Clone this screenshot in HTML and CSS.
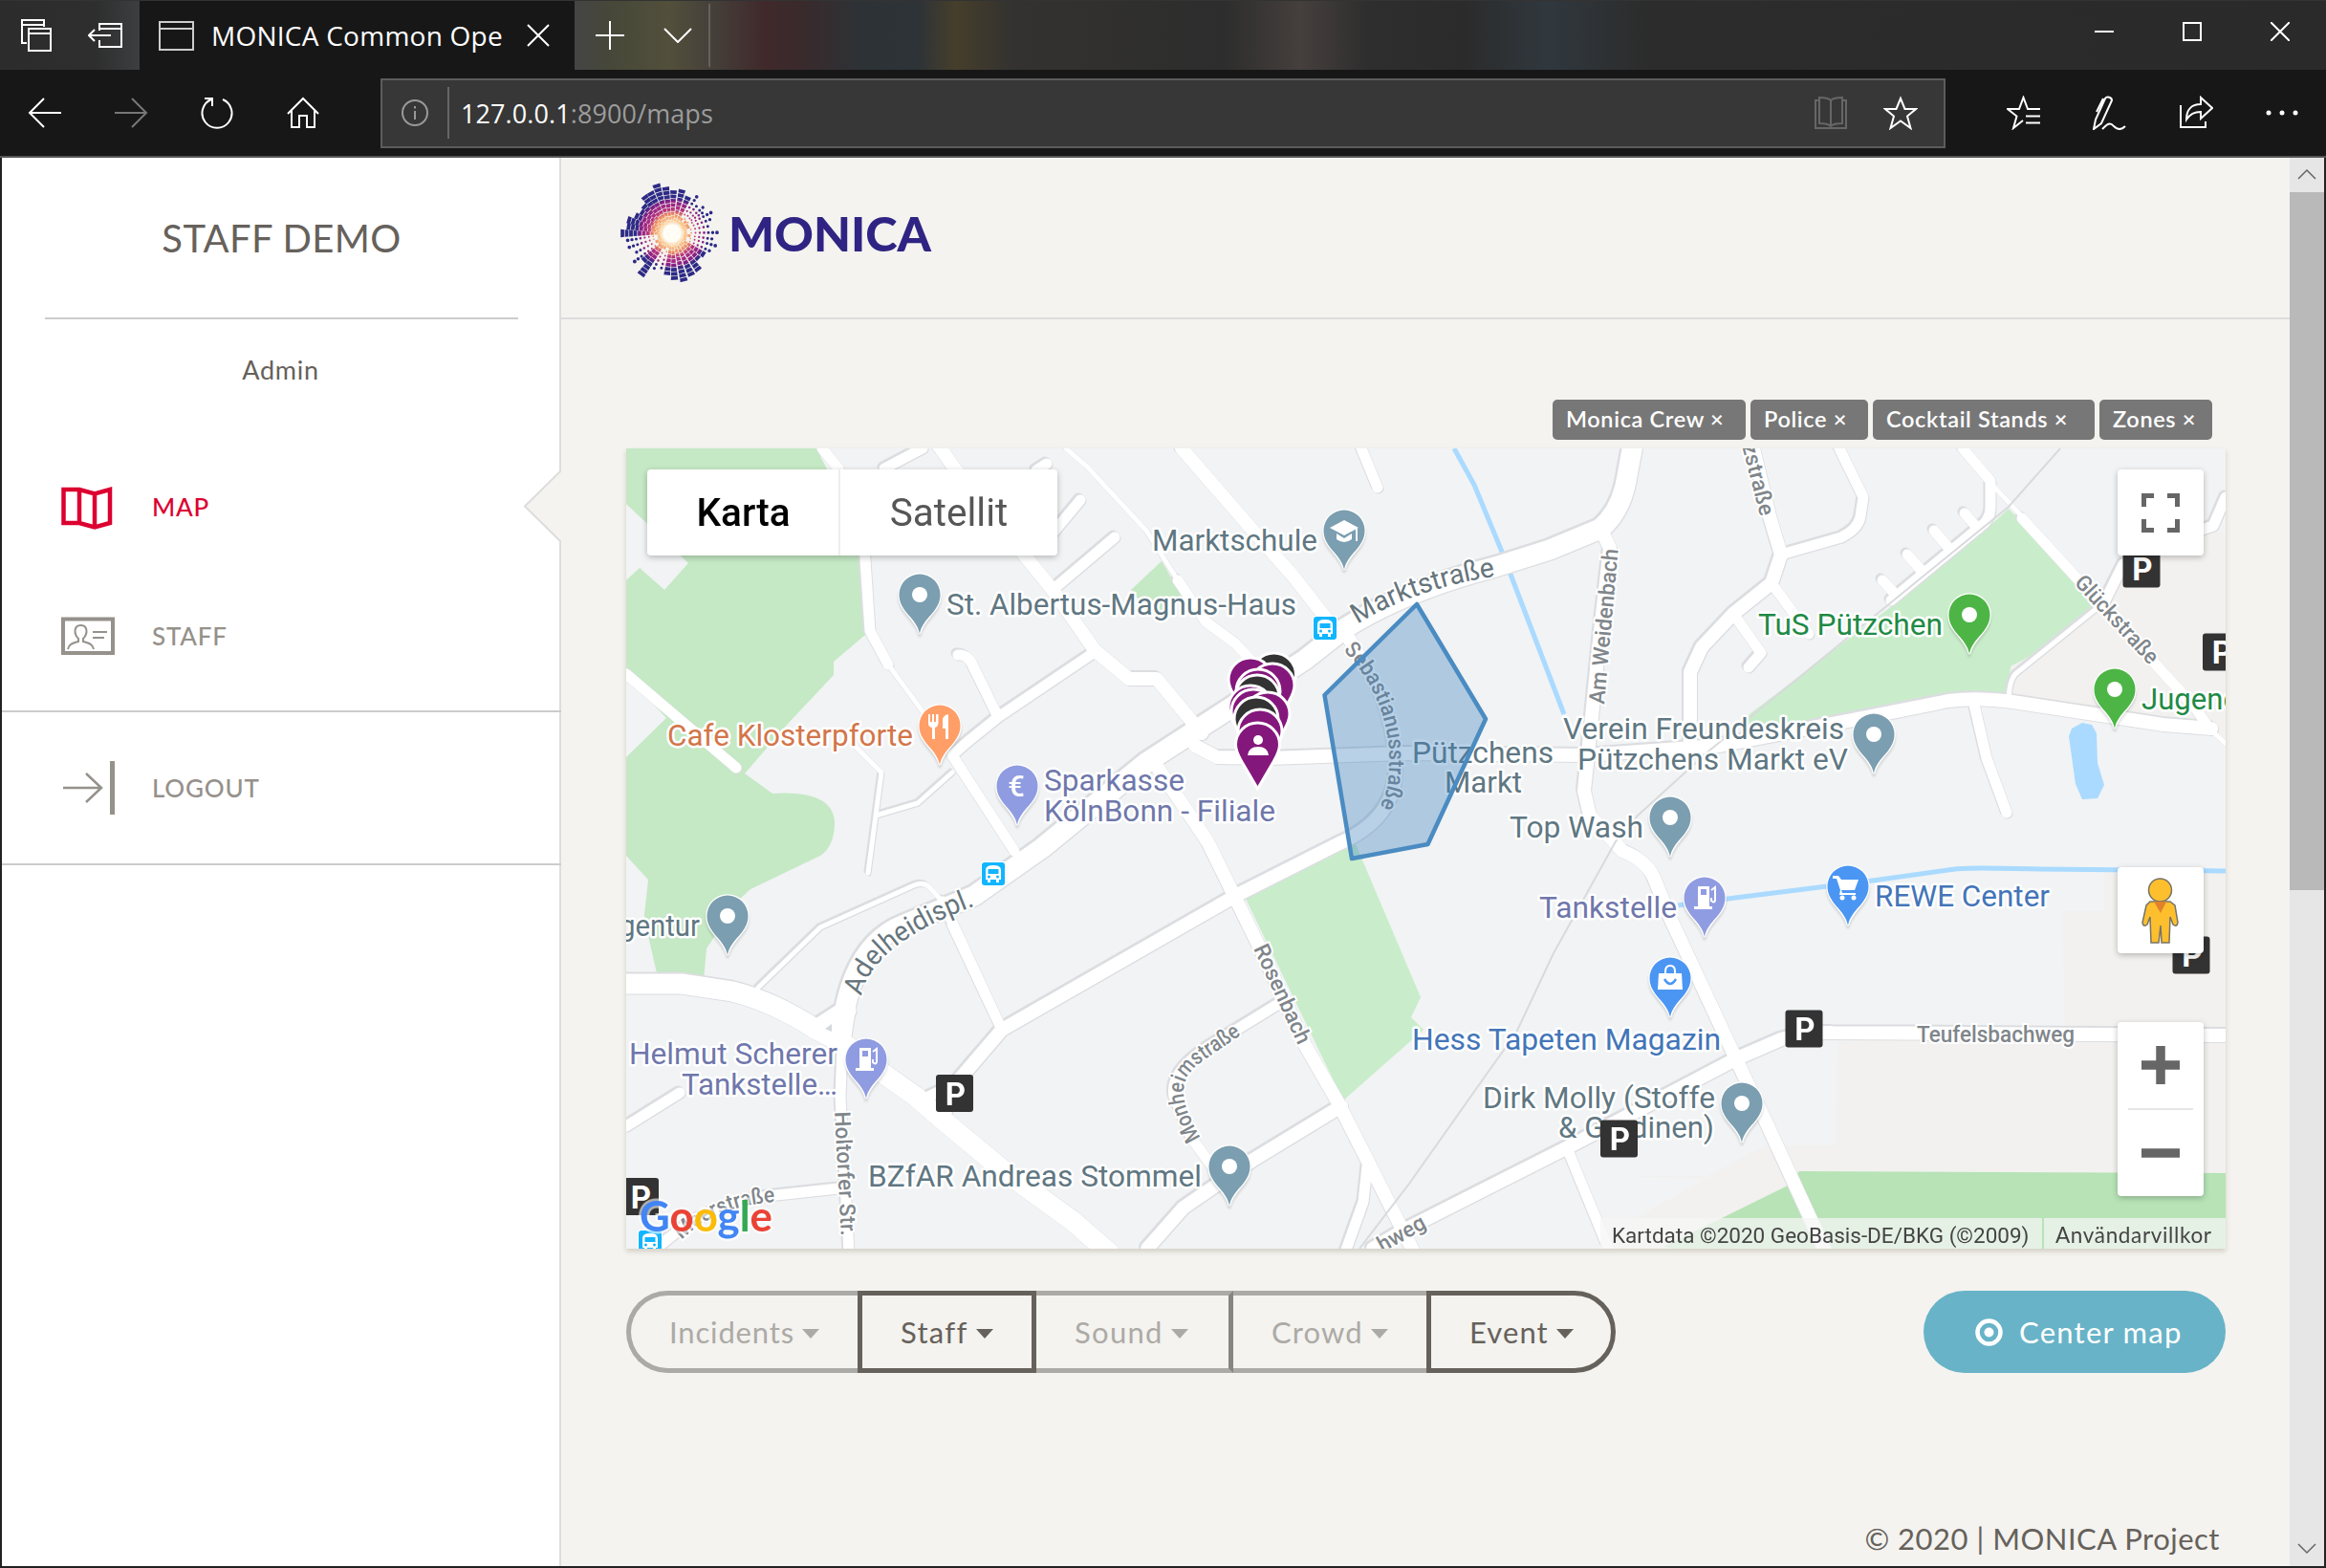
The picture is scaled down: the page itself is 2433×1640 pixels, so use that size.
FILE: index.html
```html
<!DOCTYPE html>
<html lang="sv">
<head>
<meta charset="utf-8">
<title>MONICA Common Operational Picture</title>
<link rel="stylesheet" href="styles.css">
</head>
<body>
<div class="window">
  <div class="tabstrip">
    <div class="tab-tools">
      <svg class="ic" width="32" height="34" viewBox="0 0 32 34"><path d="M6 25H1V1H24V8M1 6H24M8 10H31V33H8ZM8 15H31"/></svg>
      <svg class="ic" width="36" height="26" viewBox="0 0 36 26"><path d="M12 8V1H35V25H12V18M12 6H35M1 13H24M7 7L1 13L7 19"/></svg>
    </div>
    <div class="tab">
      <svg class="ic tab-icon" width="37" height="31" viewBox="0 0 37 31"><path d="M1 1H36V30H1ZM1 8H36"/></svg>
      <span class="tab-title">MONICA Common Ope</span>
      <svg class="ic" width="24" height="24" viewBox="0 0 24 24"><path d="M1 1L23 23M23 1L1 23"/></svg>
    </div>
    <div class="tab-actions">
      <svg class="ic" width="30" height="30" viewBox="0 0 30 30"><path d="M15 0V30M0 15H30"/></svg>
      <svg class="ic" width="30" height="16" viewBox="0 0 30 16"><path d="M1 1L15 15L29 1"/></svg>
    </div>
    <div class="window-buttons">
      <svg class="ic" width="20" height="20" viewBox="0 0 20 20"><path d="M0 10H20"/></svg>
      <svg class="ic" width="20" height="20" viewBox="0 0 20 20"><path d="M1 1H19V19H1Z"/></svg>
      <svg class="ic" width="20" height="20" viewBox="0 0 20 20"><path d="M0 0L20 20M20 0L0 20"/></svg>
    </div>
  </div>

  <div class="toolbar">
    <div class="nav-buttons">
      <svg class="ic" width="36" height="34" viewBox="0 0 36 34"><path d="M35 17H2M17 2L2 17L17 32"/></svg>
      <svg class="ic dim" width="36" height="34" viewBox="0 0 36 34"><path d="M1 17H34M19 2L34 17L19 32"/></svg>
      <svg class="ic" width="36" height="34" viewBox="0 0 36 34"><path d="M12 3A15.500 15.500 0 1 0 24 3M5 2H13V10"/></svg>
      <svg class="ic" width="36" height="34" viewBox="0 0 36 34"><path d="M2 18L18 2L34 18M6 14V32H14V20H22V32H30V14"/></svg>
    </div>
    <div class="address">
      <svg class="ic info" width="28" height="28" viewBox="0 0 28 28"><circle cx="14" cy="14" r="13"/><path d="M14 12V21M14 7V9.500"/></svg>
      <span class="url"><b>127.0.0.1</b>:8900/maps</span>
      <svg class="ic book" width="36" height="36" viewBox="0 0 36 36"><path d="M6 5H2V34H34V5H30M18 5C15 2 10 2 6 2V29C10 29 15 29 18 32C21 29 26 29 30 29V2C26 2 21 2 18 5V32"/></svg>
      <svg class="ic" width="36" height="36" viewBox="0 0 36 36"><path d="M18 3L22.500 14H34L25 21.500L28.500 34L18 26.500L7.500 34L11 21.500L2 14H13.500Z"/></svg>
    </div>
    <div class="hub-buttons">
      <svg class="ic" width="36" height="36" viewBox="0 0 36 36"><path d="M35 14H22L17.500 2L13 14H1L10.500 21.500L7 34L17 26M20 21.500H35M20 28.500H35"/></svg>
      <svg class="ic" width="36" height="36" viewBox="0 0 36 36"><path d="M1 35L3 25L13 3C15 0 20 2 20 5L9 29ZM4 17L11 3M10 35C15 30 18 27 22 32C26 36 30 36 34 32"/></svg>
      <svg class="ic" width="36" height="36" viewBox="0 0 36 36"><path d="M2 10V33H28V27M8 25C8 14 14 9 23 9V2L35 13L23 24V17C16 17 12 19 8 25Z"/></svg>
      <svg class="ic dots" width="36" height="6" viewBox="0 0 36 6"><circle cx="4" cy="3" r="2.500"/><circle cx="18" cy="3" r="2.500"/><circle cx="32" cy="3" r="2.500"/></svg>
    </div>
  </div>

  <div class="page">
    <aside class="sidebar">
      <div class="brand">STAFF DEMO</div>
      <div class="user">Admin</div>
      <nav>
        <a class="item active">
          <svg class="nav-icon" width="58" height="56" viewBox="0 0 58 56"><path d="M2.500 10H19L35 14.500L51 10V45L35 49.500L19 45H2.500ZM19 10V45M35 14.500V49.500" stroke-width="4.500"/></svg>
          <span>MAP</span>
        </a>
        <a class="item">
          <svg class="nav-icon" width="58" height="56" viewBox="0 0 58 56"><rect x="2" y="10.500" width="52" height="35.500" stroke-width="4"/><path d="M7 42C8 37 11 36 18 34V31C13 26 13 17 20.500 17S28 26 23 31V34C30 36 33 37 34 42M33 24H48M33 30H45" stroke-width="2"/></svg>
          <span>STAFF</span>
        </a>
        <a class="item logout">
          <svg class="nav-icon" width="58" height="56" viewBox="0 0 58 56"><path d="M2 28H42M26 13L42 28L26 43" stroke-width="2.500"/><path d="M53.500 0V56" stroke-width="5"/></svg>
          <span>LOGOUT</span>
        </a>
      </nav>
      <svg class="notch" width="39" height="75" viewBox="0 0 39 75"><path d="M39 0L1 37.500L39 75" /></svg>
    </aside>

    <main class="content">
      <header class="topbar">
        <svg class="logo" width="340" height="120" viewBox="640 184 340 120">
          <defs>
            <radialGradient id="burst" gradientUnits="userSpaceOnUse" cx="704" cy="244" r="52">
              <stop offset="0" stop-color="#fff"/><stop offset=".18" stop-color="#fff3dc"/>
              <stop offset=".26" stop-color="#fcc98c"/><stop offset=".38" stop-color="#ee8f62"/>
              <stop offset=".48" stop-color="#b4327f"/><stop offset=".64" stop-color="#8a1f86"/>
              <stop offset=".72" stop-color="#2d2a86"/><stop offset="1" stop-color="#2d2a86"/>
            </radialGradient>
          </defs>
          <g id="rays" fill="url(#burst)"></g>
          <circle cx="704" cy="244" r="9.500" fill="#fffdf6"/>
          <text class="logo-text" x="763" y="263" textLength="212" lengthAdjust="spacingAndGlyphs">MONICA</text>
        </svg>
      </header>

      <div class="tags">
        <span class="tag t1">Monica Crew ×</span>
        <span class="tag t2">Police ×</span>
        <span class="tag t3">Cocktail Stands ×</span>
        <span class="tag t4">Zones ×</span>
      </div>

      <section class="map">
        <svg class="map-canvas" width="1673" height="837" viewBox="655 469 1673 837">
          <defs>
            <path id="pin" d="M0 41C-3 24-21.500 18-21.500 0A21.500 21.500 0 0 1 21.500 0C21.500 18 3 24 0 41Z"/>
            <path id="mark" d="M0 46L-17 17C-21 10-23 6-23 0A23 23 0 0 1 23 0C23 6 21 10 17 17Z"/>
            <g id="bus"><rect x="-13" y="-13" width="26" height="26" rx="3" fill="#fff"/><rect x="-12" y="-12" width="24" height="24" rx="3" fill="#12b5ff"/><path d="M-8-4Q-8-9 0-9T8-4V6H6V9H3V6H-3V9H-6V6H-8Z" fill="#fff"/><path d="M-5.500-5H5.500V0H-5.500Z" fill="#12b5ff"/><circle cx="-4.500" cy="3" r="1.500" fill="#12b5ff"/><circle cx="4.500" cy="3" r="1.500" fill="#12b5ff"/></g>
            <g id="pump" fill="#fff"><path d="M-7-12H5V9H8V12H-11V9H-7ZM-4-9V-3H2V-9Z" fill-rule="evenodd"/><path d="M7-8L11-11V3Q10 6 7 3V0" fill="none" stroke="#fff" stroke-width="2"/></g>
            <g id="park"><rect x="-19.500" y="-19.500" width="39" height="39" rx="3" fill="#333"/><text class="p" x="1" y="12" text-anchor="middle">P</text></g>
            <g id="roads" fill="none" stroke-linejoin="round" stroke-linecap="round">
              <g class="w-thin">
                <path d="M894 780L922 808L916 853L908 913M916 853L960 840L996 808M929 695L967 747"/>
                <path d="M793 1033L858 970L956 926Q966 922 972 928L986 943"/>
                <path d="M1115 469L1137 488L1199 555L1232 607M2082 505L2113 538M2311 762L2328 778"/>
                <path d="M2221 590L2201 630L2108 705Q2102 712 2101 730"/>
              </g>
              <g class="w-small">
                <path d="M860 469L877 490L904 570L910 660L929 695M925 490L965 469M1101 617L1166 562M1095 565L1130 523M1084 492L1095 485"/>
                <path d="M1145 682L1044 750L1013 775L996 790L1061 890M1002 685Q1011 684 1016 693L1044 750M655 705L770 803M996 967L1048 1077L986 943"/>
                <path d="M1232 607L1261 650L1292 673L1311 693M1424 469L1441 510M1853 610L1892 663M1813 642L1842 683L1829 698"/>
                <path d="M1863 580L1926 562Q1944 553 1946 540L1949 520L1924 469M1978 628L2076 547Q2082 540 2082 530V503L2053 469M1969 607L1984 623M1995 580L2011 598M2023 555L2040 575M2055 537L2069 553"/>
                <path d="M2115 542L2296 740L2311 762M2300 555L2315 550L2328 520M2065 737L2078 793L2099 850M1342 1047L1277 1087Q1222 1118 1228 1147L1246 1190L1273 1227M1430 1220L1426 1257L1407 1310"/>
                <path d="M1640 1203L1684 1310M881 1097L879 1147L888 1310M877 1243L812 1250Q740 1258 690 1303M655 1178L711 1143M965 1150L1000 1133L988 1170M2221 590L2201 630"/>
              </g>
              <g class="w-mid">
                <path d="M981 465L1000 492L1101 617L1145 680L1181 710L1210 710L1257 767M1236 469L1315 560L1353 603L1395 657"/>
                <path d="M1000 1133L1048 1077L1240 967L1296 935L1399 883Q1462 856 1460 800T1430 700L1408 663"/>
                <path d="M1676 557L1684 573L1674 660L1665 750L1657 827L1663 853L1697 890Q1722 900 1730 918L1747 960L1817 1110L1847 1173L1910 1310"/>
                <path d="M1250 780L1273 792L1326 793L1468 788L1659 790L1797 780L1938 753L2038 733Q2067 729 2105 734L2263 758L2313 762"/>
                <path d="M1768 780V703L1780 677L1813 642L1853 610L1863 580L1851 540L1834 469"/>
                <path d="M1211 803L1263 880L1322 1000L1365 1093L1399 1152L1430 1213L1480 1312M1403 1157L1311 1213L1238 1263L1200 1306"/>
                <path d="M1436 1306L1468 1287L1640 1200L1817 1107L1863 1087Q1890 1079 1917 1080L2330 1083"/>
              </g>
              <g class="w-main">
                <path d="M650 1029H713L766 1037Q810 1048 854 1077L885 1093L927 1125L958 1147L988 1173L1053 1227L1122 1277L1160 1310"/>
                <path d="M879 1090L885 1050Q900 985 946 967L1019 937L1090 887L1200 797L1365 690L1407 657Q1468 618 1564 593L1621 575L1674 553Q1695 535 1701 503L1708 465M854 1077L885 1057"/>
              </g>
            </g>
          </defs>

          <rect x="655" y="469" width="1673" height="837" fill="#f1f3f4"/>
          <path fill="#f2f1ef" d="M2328 557H2300L2221 583L2190 638L2103 697V735L2317 763L2328 780ZM2201 912H2328V1230H1700L1780 1233L1847 1198H1920L1922 1090L2160 1073L2157 953H2201ZM1680 1306L1713 1273L1847 1198L1900 1225H2000V1306Z"/>
          <path fill="#c5e8c5" d="M655 469H854L900 560L905 664L872 692V706L824 757L779 809L808 830Q873 826 873 862Q872 886 858 895L785 930L774 940L739 992L736 1025L688 1022L679 983L674 957L678 920L655 895Z"/>
          <path fill="#f1f3f4" d="M655 527L690 560L720 589L695 617L669 594L655 607ZM655 705L697 751L655 792Z"/>
          <path fill="#c5e8c5" d="M1215 587L1236 623L1205 645L1183 617Z"/>
          <path fill="#c9edcb" d="M1303 940L1409 883H1418L1486 1043L1476 1064L1489 1077L1405 1151ZM2101 532L2169 603L2190 638L2151 672L2103 697L2101 730L2038 727L1917 755L1815 775L1830 747L1980 633L2076 555Z"/>
          <path fill="#b7e3b6" d="M1882 1225L2328 1227V1306H1750L1740 1304L1870 1240Z"/>
          <path fill="#aadaff" d="M2178 756L2188 758L2193 767L2194 798L2201 821L2194 835L2178 836L2171 820L2164 770L2167 762Z"/>
          <path fill="none" stroke="#aadaff" stroke-width="5" d="M1521 469L1542 507L1571 577L1636 747M1755 947L1807 940L1959 921L2045 909Q2057 907 2134 909L2328 911"/>
          <use href="#roads" class="casing"/>
          <use href="#roads" class="fill"/>
          <path class="rail" d="M2155 469L2101 530L1788 785L1713 853L1690 880L1625 997L1586 1080L1556 1122L1474 1238L1422 1306"/>
          <path d="M863 1076L870 1071V1079Z" fill="#d5d8dc"/>

          <defs>
            <path id="p1" d="M1420 653Q1478 616 1568 602"/>
            <path id="p2" d="M1678 737L1693 572"/>
            <path id="p3" d="M1405 680C1436 710 1453 755 1453 790S1450 830 1441 848"/>
            <path id="p4" d="M901 1042Q912 987 1021 947"/>
            <path id="p5" d="M873 1163L880 1295"/>
            <path id="p6" d="M1311 992L1359 1096"/>
            <path id="p7" d="M1256 1190C1228 1142 1235 1125 1262 1107L1306 1077"/>
            <path id="p8" d="M713 1297Q750 1260 814 1257"/>
            <path id="p9" d="M1822 466L1842 543"/>
            <path id="p10" d="M2169 610L2250 698"/>
            <path id="p11" d="M1446 1310L1496 1282"/>
          </defs>
          <g class="street">
            <text class="big"><textPath href="#p1" textLength="154" lengthAdjust="spacingAndGlyphs">Marktstraße</textPath></text>
            <text><textPath href="#p2" textLength="163" lengthAdjust="spacingAndGlyphs">Am Weidenbach</textPath></text>
            <text><textPath href="#p3" textLength="178" lengthAdjust="spacingAndGlyphs">Sebastianusstraße</textPath></text>
            <text class="big"><textPath href="#p4" textLength="158" lengthAdjust="spacingAndGlyphs">Adelheidispl.</textPath></text>
            <text><textPath href="#p5" textLength="130" lengthAdjust="spacingAndGlyphs">Holtorfer Str.</textPath></text>
            <text><textPath href="#p6" textLength="112" lengthAdjust="spacingAndGlyphs">Rosenbach</textPath></text>
            <text><textPath href="#p7" textLength="140" lengthAdjust="spacingAndGlyphs">Monheimstraße</textPath></text>
            <text><textPath href="#p8" textLength="108" lengthAdjust="spacingAndGlyphs">Meerstraße</textPath></text>
            <text><textPath href="#p9" textLength="77" lengthAdjust="spacingAndGlyphs">zstraße</textPath></text>
            <text><textPath href="#p10" textLength="117" lengthAdjust="spacingAndGlyphs">Glückstraße</textPath></text>
            <text><textPath href="#p11" textLength="54" lengthAdjust="spacingAndGlyphs">hweg</textPath></text>
            <text x="2005" y="1090" textLength="165" lengthAdjust="spacingAndGlyphs">Teufelsbachweg</text>
          </g>
          <g class="poi">
            <text x="1205" y="576" textLength="173" lengthAdjust="spacingAndGlyphs">Marktschule</text>
            <text x="990" y="643" textLength="366" lengthAdjust="spacingAndGlyphs">St. Albertus-Magnus-Haus</text>
            <text class="food" x="698" y="780" textLength="257" lengthAdjust="spacingAndGlyphs">Cafe Klosterpforte</text>
            <text class="money" x="1092" y="827" textLength="147" lengthAdjust="spacingAndGlyphs">Sparkasse</text>
            <text class="money" x="1092" y="859" textLength="242" lengthAdjust="spacingAndGlyphs">KölnBonn - Filiale</text>
            <text x="648" y="979" textLength="84" lengthAdjust="spacingAndGlyphs">gentur</text>
            <text class="money" x="658" y="1113" textLength="218" lengthAdjust="spacingAndGlyphs">Helmut Scherer</text>
            <text class="money" x="713" y="1145" textLength="163" lengthAdjust="spacingAndGlyphs">Tankstelle…</text>
            <text x="908" y="1241" textLength="349" lengthAdjust="spacingAndGlyphs">BZfAR Andreas Stommel</text>
            <text x="1477" y="798" textLength="148" lengthAdjust="spacingAndGlyphs">Pützchens</text>
            <text x="1511" y="829" textLength="81" lengthAdjust="spacingAndGlyphs">Markt</text>
            <text x="1635" y="773" textLength="294" lengthAdjust="spacingAndGlyphs">Verein Freundeskreis</text>
            <text x="1650" y="805" textLength="283" lengthAdjust="spacingAndGlyphs">Pützchens Markt eV</text>
            <text x="1579" y="876" textLength="140" lengthAdjust="spacingAndGlyphs">Top Wash</text>
            <text class="money" x="1610" y="960" textLength="144" lengthAdjust="spacingAndGlyphs">Tankstelle</text>
            <text class="shop" x="1961" y="948" textLength="183" lengthAdjust="spacingAndGlyphs">REWE Center</text>
            <text class="shop" x="1477" y="1098" textLength="323" lengthAdjust="spacingAndGlyphs">Hess Tapeten Magazin</text>
            <text x="1551" y="1159" textLength="243" lengthAdjust="spacingAndGlyphs">Dirk Molly (Stoffe</text>
            <text x="1630" y="1190" textLength="163" lengthAdjust="spacingAndGlyphs">&amp; Gardinen)</text>
            <text class="green" x="1839" y="664" textLength="193" lengthAdjust="spacingAndGlyphs">TuS Pützchen</text>
            <text class="green" x="2240" y="742" textLength="103" lengthAdjust="spacingAndGlyphs">Jugend</text>
          </g>
          <g class="pins">
            <g fill="#7b9eb0">
              <use href="#pin" x="1406" y="555"/><use href="#pin" x="962" y="622"/><use href="#pin" x="761" y="958"/><use href="#pin" x="1286" y="1220"/><use href="#pin" x="1960" y="768"/><use href="#pin" x="1747" y="855"/><use href="#pin" x="1822" y="1154"/>
            </g>
            <use href="#pin" x="983" y="759" fill="#ff9e67"/>
            <g fill="#909ce1"><use href="#pin" x="1064" y="822"/><use href="#pin" x="906" y="1108"/><use href="#pin" x="1783" y="939"/></g>
            <g fill="#4b96f3"><use href="#pin" x="1933" y="927"/><use href="#pin" x="1747" y="1023"/></g>
            <g fill="#4db546"><use href="#pin" x="2060" y="643"/><use href="#pin" x="2212" y="721"/></g>
          </g>
          <g fill="#fff">
            <circle cx="962" cy="622" r="8"/><circle cx="761" cy="958" r="8"/><circle cx="1286" cy="1220" r="8"/><circle cx="1960" cy="768" r="8"/><circle cx="1747" cy="855" r="8"/><circle cx="1822" cy="1154" r="8"/><circle cx="2060" cy="643" r="8"/><circle cx="2212" cy="721" r="8"/>
            <path d="M1391 552L1406 544L1421 552L1406 560ZM1398 558L1406 563L1414 558V564Q1406 570 1398 564ZM1418 553H1420V566H1418Z"/>
            <path d="M971 747H973V755H975V747H977V755H979V747H981.500V757Q981 760 978 761V773H975V761Q971 760 971 757ZM992 747V773H989V762H986V752Q987 748 992 747Z"/>
            <path d="M1917 916H1923L1926 920H1944L1940 931H1926L1927 934H1941V936H1924L1925 931L1921 919H1917Z"/><circle cx="1927" cy="939" r="2.500"/><circle cx="1939" cy="939" r="2.500"/>
            <path d="M1735 1018H1759L1760 1035H1734Z"/>
          </g>
          <path d="M1742 1020V1016Q1742 1010 1747 1010T1752 1016V1020" fill="none" stroke="#fff" stroke-width="2"/>
          <path d="M1741 1024Q1747 1034 1753 1024" fill="none" stroke="#4b96f3" stroke-width="2.500"/>
          <text class="euro" x="1063" y="833" text-anchor="middle">€</text>
          <use href="#pump" x="906" y="1108"/><use href="#pump" x="1783" y="939"/>
          <use href="#bus" x="1386" y="657"/><use href="#bus" x="1039" y="914"/><use href="#bus" x="680" y="1299"/>

          <path class="zone" d="M1482 632L1554 752L1493.500 883L1414 898L1385.500 727Z"/>

          <use href="#park" x="998.500" y="1143.500"/><use href="#park" x="669.500" y="1251.500"/><use href="#park" x="1693.500" y="1191"/><use href="#park" x="1887" y="1076"/><use href="#park" x="2292" y="999"/><use href="#park" x="2240" y="595"/><use href="#park" x="2323.500" y="682"/>

          <g class="staff-marks">
            <use href="#mark" x="1332.500" y="706" class="k"/><use href="#mark" x="1308" y="711"/><use href="#mark" x="1331" y="717"/><use href="#mark" x="1316" y="723"/><use href="#mark" x="1315" y="729" class="k"/><use href="#mark" x="1308" y="740"/><use href="#mark" x="1311" y="744"/><use href="#mark" x="1326" y="747"/><use href="#mark" x="1314" y="752" class="k"/><use href="#mark" x="1318" y="765"/><use href="#mark" x="1315.500" y="779"/>
          </g>
          <circle cx="1316" cy="774" r="5" fill="#fff"/><path d="M1305 790Q1306 781 1316 781T1327 790Z" fill="#fff"/>

          <text class="google" x="669" y="1288" textLength="139" lengthAdjust="spacingAndGlyphs"><tspan fill="#4285f4">G</tspan><tspan fill="#ea4335">o</tspan><tspan fill="#fbbc05">o</tspan><tspan fill="#4285f4">g</tspan><tspan fill="#34a853">l</tspan><tspan fill="#ea4335">e</tspan></text>
        </svg>

        <div class="map-type"><span class="on">Karta</span><span>Satellit</span></div>
        <div class="ctl fullscreen"><svg width="40" height="41" viewBox="0 0 40 41"><path d="M2.500 14V2.500H13M27 2.500H37.500V14M37.500 27V38.500H27M13 38.500H2.500V27" fill="none" stroke="#666" stroke-width="5"/></svg></div>
        <div class="ctl pegman"><svg width="40" height="70" viewBox="0 0 40 70"><g stroke="#777468" stroke-width="1.500"><path d="M9 25H30L35 29L38 47Q37 52 33 49L30 41L29 68H21L20 50L18 68H10L9 41L6 49Q2 52 1 47L5 29Z" fill="#fdbf2d"/><circle cx="19.500" cy="13" r="12" fill="#fdbf2d"/></g><path d="M13 25H26L20 37Z" fill="#e1812b"/></svg></div>
        <div class="ctl zoom">
          <svg width="40" height="40" viewBox="0 0 40 40"><path d="M20 0V40M0 20H40" stroke="#666" stroke-width="9.500"/></svg>
          <i></i>
          <svg width="40" height="40" viewBox="0 0 40 40"><path d="M0 20H40" stroke="#666" stroke-width="9.500"/></svg>
        </div>
        <div class="attribution"><span class="data">Kartdata ©2020 GeoBasis-DE/BKG (©2009)</span><span class="terms">Användarvillkor</span></div>
      </section>

      <div class="actions">
        <div class="group">
          <button class="b1">Incidents<i></i></button>
          <button class="b2 on">Staff<i></i></button>
          <button class="b3">Sound<i></i></button>
          <button class="b4">Crowd<i></i></button>
          <button class="b5 on">Event<i></i></button>
        </div>
        <button class="center"><svg width="29" height="29" viewBox="0 0 29 29"><circle cx="14.500" cy="14.500" r="12" fill="none" stroke="#fff" stroke-width="4.500"/><circle cx="14.500" cy="14.500" r="5" fill="#fff"/></svg><span>Center map</span></button>
      </div>
      <footer><span>© 2020 | MONICA Project</span></footer>
    </main>

    <div class="scrollbar">
      <svg class="arrow" width="36" height="36" viewBox="0 0 36 36"><path d="M9 22L18 13L27 22"/></svg>
      <div class="thumb"></div>
      <svg class="arrow" width="36" height="36" viewBox="0 0 36 36"><path d="M9 13L18 22L27 13"/></svg>
    </div>
  </div>
</div>
<script src="logo.js"></script>
</body>
</html>
```
FILE: logo.js
```js
// Draws the rays of the logo: [angle in degrees, outer radius, kind], b = blocks, d = dots.
const rays = [
  [-180, 54, 'b'], [-171, 48, 'b'], [-163, 49, 'b'], [-154, 43, 'b'], [-145, 40, 'b'], [-136, 42, 'b'],
  [-127, 49, 'b'], [-118, 49, 'b'], [-108, 54, 'b'], [-98, 49, 'b'], [-88, 45, 'b'], [-77, 47, 'b'], [-66, 42, 'b'],
  [-56, 46, 'd'], [-48, 38, 'd'], [-40, 42, 'd'], [-28, 46, 'd'], [-34, 38, 'd'], [-20, 42, 'd'], [-11, 38, 'd'],
  [-1, 47, 'd'], [8, 42, 'd'], [16, 47, 'd'], [25, 43, 'd'],
  [34, 41, 'b'], [44, 39, 'b'], [54, 48, 'b'], [65, 49, 'b'], [76, 52, 'b'], [87, 49, 'b'], [97, 44, 'b'],
  [107, 38, 'd'], [117, 41, 'd'], [127, 55, 'b'], [136, 42, 'b'],
  [143, 49, 'd'], [152, 42, 'd'], [162, 47, 'd'], [171, 47, 'd']
];
const cx = 704, cy = 244;
const svgNs = 'http://www.w3.org/2000/svg';
const layer = document.getElementById('rays');
for (const [deg, outer, kind] of rays) {
  const ray = document.createElementNS(svgNs, 'path');
  const at = (r, a) => {
    const t = (deg + a) * Math.PI / 180;
    return (cx + r * Math.cos(t)).toFixed(2) + ' ' + (cy + r * Math.sin(t)).toFixed(2);
  };
  let d = '';
  for (let r = outer; r > 9; r -= 4.5) {
    if (kind === 'b' || r < 20) {
      const a = 4.4;
      d += `M${at(r, -a)}L${at(r, a)}L${at(r - 3.8, a)}L${at(r - 3.8, -a)}Z`;
    } else {
      const s = r / 25;
      d += `M${at(r, 0)}m${-s} 0a${s} ${s} 0 1 0 ${2 * s} 0a${s} ${s} 0 1 0 ${-2 * s} 0Z`;
    }
  }
  ray.setAttribute('d', d);
  layer.appendChild(ray);
}
```
FILE: styles.css
```css
* { box-sizing: border-box; }
body { margin: 0; font-family: Lato, "Open Sans", sans-serif; color: #66615b; overflow: hidden; }
.window { width: 2433px; height: 1640px; display: flex; flex-direction: column; background: #222; padding-bottom: 2px; }
svg { display: block; flex: none; }
.ic { fill: none; stroke: #fff; stroke-width: 2; }

.tabstrip { height: 73px; flex: none; display: flex; border-top: 1px solid #333; background: linear-gradient(90deg, #2c2c2c 0, #2e2e2e 100px, #3c3e40 145px, #444 600px, #474839 640px, #524f3b 700px, #45403a 745px, #40292b 800px, #392a2c 840px, #2d3236 900px, #2e3337 960px, #463e2b 1000px, #333230 1060px, #2d2d2d 1280px, #453f3d 1360px, #2e2e2e 1430px, #2b2b2b 1530px, #30383e 1620px, #2c2c2c 1720px, #2a2a2a); }
.tab-tools { width: 146px; display: flex; align-items: center; padding-left: 22px; gap: 38px; }
.tab { width: 455px; background: #171717; display: flex; align-items: center; padding-left: 20px; }
.tab-icon { stroke: #ccc; }
.tab-title { width: 348px; padding-left: 18px; font: 28px/40px "Open Sans", sans-serif; color: #fff; letter-spacing: .25px; white-space: nowrap; }
.tab-actions { width: 142px; display: flex; align-items: center; padding-left: 22px; gap: 41px; border: 2px solid #66625a; border-left: 0; border-top-color: transparent; border-bottom-color: transparent; margin: 2px 0; }
.window-buttons { margin-left: auto; display: flex; gap: 72px; padding: 22px 38px 0 0; }

.toolbar { height: 92px; flex: none; display: flex; align-items: center; background: #171717; border-bottom: 2px solid #555; padding-left: 29px; }
.nav-buttons { display: flex; gap: 54px; width: 369px; }
.dim { stroke: #777; }
.address { width: 1637px; height: 73px; background: #373737; border: 2px solid #5c5c5c; display: flex; align-items: center; padding-left: 20px; padding-right: 27px; }
.info { stroke: #999; }
.url { flex: 1; margin-left: 20px; padding-left: 12px; border-left: 2px solid #666; font: 27px/56px "Open Sans", sans-serif; height: 54px; letter-spacing: .1px; color: #9c9c9c; }
.url b { color: #fff; font-weight: 400; }
.book { stroke: #666; margin-right: 37px; }
.hub-buttons { display: flex; align-items: center; gap: 54px; padding-left: 64px; }
.dots { fill: #fff; stroke: none; }

.page { flex: 1; display: flex; margin: 0 2px; min-height: 0; }
.sidebar { position: relative; width: 585px; flex: none; background: #fff; border-right: 2px solid #ddd; }
.brand { height: 169px; margin: 0 43px 0 45px; border-bottom: 2px solid #ccc; text-align: center; font-size: 40px; line-height: 169px; letter-spacing: .35px; }
.user { height: 128px; line-height: 106px; text-align: center; font-size: 27px; letter-spacing: .7px; }
.item { display: flex; align-items: center; height: 135px; padding-left: 62px; color: #95918b; font-size: 26px; gap: 37px; font-weight: 500; letter-spacing: .8px; }
.item.active { color: #dc0030; }
.item.logout { height: 162px; margin-top: 11px; margin-right: -2px; border: solid #ccc; border-width: 2px 0; }
.nav-icon { fill: none; stroke: currentColor; }
.notch { position: absolute; right: -2px; top: 327px; fill: #f4f3ef; stroke: #ddd; stroke-width: 2; }

.content { flex: 1; background: #f4f3ef; }
.topbar { height: 169px; border-bottom: 2px solid #ddd; padding: 19px 0 0 52px; }
.logo-text { font: 900 50px Lato, sans-serif; fill: #2f2483; }
.tags { display: flex; justify-content: flex-end; gap: 5px; padding: 84px 81px 0 0; }
.tag { height: 42px; padding-left: 14px; border-radius: 5px; background: #777; color: #fff; font-size: 23.500px; line-height: 41px; font-weight: 600; letter-spacing: .65px; white-space: nowrap; }
.t1 { width: 202px; } .t2 { width: 123px; } .t3 { width: 232px; } .t4 { width: 118px; }

.map { position: relative; width: 1673px; height: 837px; margin: 9px 0 0 68px; box-shadow: 0 3px 5px rgba(100, 80, 50, .22); font-family: Roboto, sans-serif; }
.w-thin { stroke-width: 5px; } .w-small { stroke-width: 11px; } .w-mid { stroke-width: 14px; } .w-main { stroke-width: 21px; }
.fill { stroke: #fff; }
.casing { stroke: #dcdde1; filter: drop-shadow(1.5px 1.5px 0 #dcdde1) drop-shadow(-1.5px -1.5px 0 #dcdde1); }
.rail { fill: none; stroke: #d9dadc; stroke-width: 2; }
.street text { font-size: 23px; fill: #80868b; stroke: #fff; stroke-width: 4px; paint-order: stroke; font-weight: 500; }
.street .big { font-size: 29px; fill: #66757c; font-weight: 400; }
.poi text { font-size: 31px; fill: #5f7782; stroke: #fff; stroke-width: 5px; paint-order: stroke; stroke-linejoin: round; }
.poi .food { fill: #d3764a; } .poi .money { fill: #6f77ab; } .poi .shop { fill: #4375b8; } .poi .green { fill: #1e8a45; }
.pins { stroke: #fff; stroke-width: 2.500px; paint-order: stroke; filter: drop-shadow(0 3px 1px rgba(0, 0, 0, .12)); }
.euro { font: 500 31px Roboto, sans-serif; fill: #fff; }
.p { font: 700 33px Roboto, sans-serif; fill: #fff; }
.zone { fill: #3f82be; fill-opacity: .37; stroke: #4a8bc2; stroke-width: 4.500px; stroke-linejoin: round; }
.staff-marks { fill: #84177c; stroke: #fff; stroke-width: 3px; }
.k { fill: #333; }
.google { font: 700 43px Lato, sans-serif; stroke: rgba(255, 255, 255, .6); stroke-width: 5px; paint-order: stroke; }

.map-type { position: absolute; left: 22px; top: 22px; display: flex; height: 90px; width: 429px; background: #fff; border-radius: 4px; box-shadow: 0 2px 6px rgba(0, 0, 0, .25); font-size: 40.500px; line-height: 90px; color: #565656; }
.map-type span { width: 227px; text-align: center; }
.map-type .on { width: 202px; padding-left: 1px; color: #000; font-weight: 500; border-right: 2px solid #eee; }
.ctl { position: absolute; left: 1560px; width: 90px; background: #fff; border-radius: 4px; box-shadow: 0 2px 6px rgba(0, 0, 0, .25); display: flex; flex-direction: column; align-items: center; justify-content: center; }
.fullscreen { top: 22px; height: 90px; }
.pegman { top: 438px; height: 90px; padding: 2px 1px 0 0; }
.zoom { top: 600px; height: 182px; gap: 25px; }
.zoom i { width: 68px; height: 2px; background: #e6e6e6; }
.attribution { position: absolute; right: 0; bottom: 0; display: flex; height: 32px; font-size: 22.500px; line-height: 36px; color: #444; white-space: nowrap; }
.attribution span { background: rgba(245, 245, 245, .75); }
.data { width: 462px; padding-left: 12px; margin-right: 2px; }
.terms { width: 190px; padding-left: 12px; font-family: Lato, sans-serif; letter-spacing: .65px; }

.actions { display: flex; justify-content: space-between; margin: 44px 67px 0 68px; height: 86px; }
.group { display: flex; }
button { font: 31px/76px Lato, sans-serif; background: none; margin: 0; display: flex; align-items: center; padding: 0; letter-spacing: .85px; white-space: nowrap; }
.group button { border: 5px solid #acaaa6; color: #acaaa6; padding-left: 40px; }
.group button.on { border-color: #66615b; color: #66615b; }
.group i { border: 9px solid transparent; border-top: 10px solid; border-bottom: 0; margin: 3px 0 0 8px; }
.group .b1 { width: 242px; border-right: 0; border-radius: 43px 0 0 43px; }
.group .b2 { width: 187px; letter-spacing: 1.300px; }
.group .b3 { width: 206px; border-left: 0; border-right-color: #888580; letter-spacing: 1.300px; }
.group .b4 { width: 202px; border-width: 5px 0; letter-spacing: 1.100px; }
.group .b5 { width: 198px; border-radius: 0 43px 43px 0; letter-spacing: 1.100px; }
.center { width: 316px; border: 0; border-radius: 43px; background: #68b3c8; color: #fff; padding-left: 54px; gap: 17px; letter-spacing: 1.250px; }
footer { display: flex; justify-content: flex-end; padding: 150px 73px 0 0; font-size: 31px; line-height: 46px; letter-spacing: .5px; }

.scrollbar { width: 36px; background: #e6e6e6; display: flex; flex-direction: column; }
.arrow { fill: none; stroke: #666; stroke-width: 1.500; }
.thumb { height: 730px; background: #b9b9b9; margin-bottom: auto; }
```
